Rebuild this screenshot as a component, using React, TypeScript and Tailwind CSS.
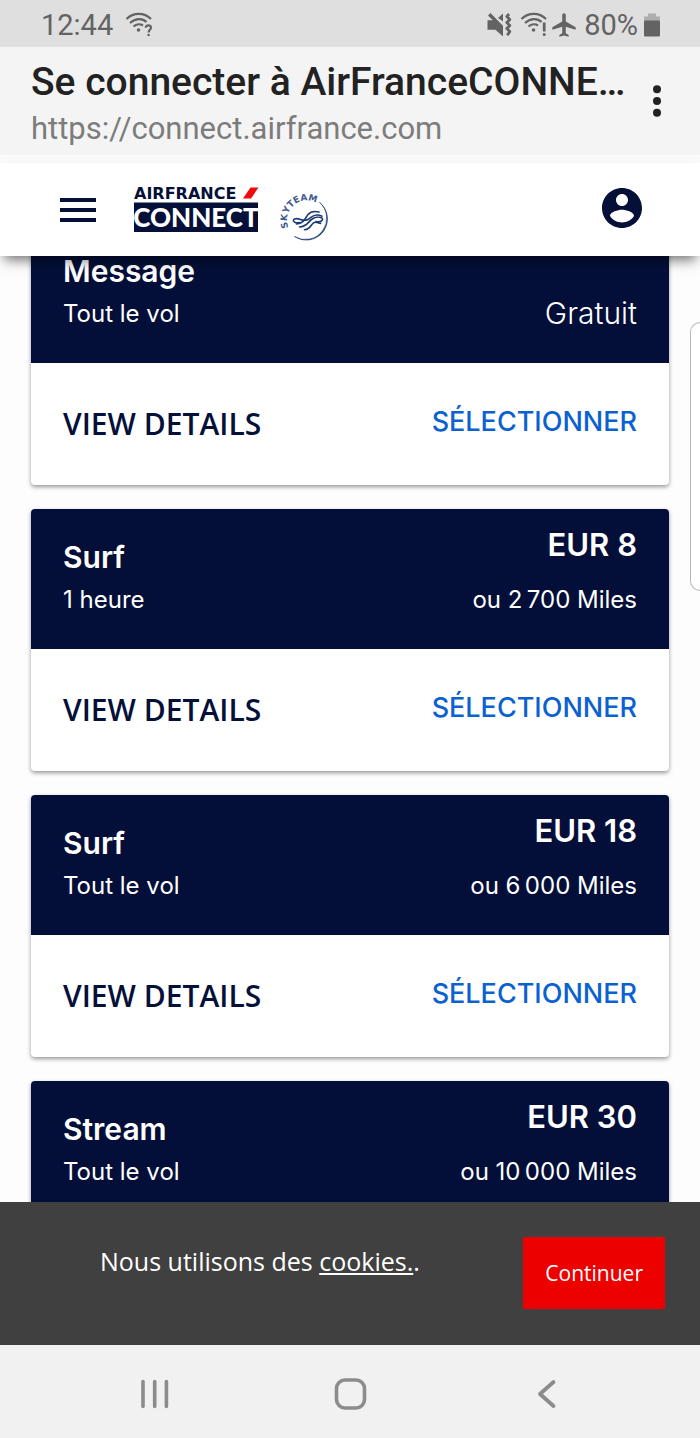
import React from "react";
import { MdAirplanemodeActive, MdMenu } from "react-icons/md";

type Plan = {
  name: string;
  duration: string;
  price: string;
  miles?: string;
  summaryOnly?: boolean;
};

const plans: Plan[] = [
  { name: "Message", duration: "Tout le vol", price: "Gratuit" },
  { name: "Surf", duration: "1 heure", price: "EUR 8", miles: "ou 2\u2009700 Miles" },
  { name: "Surf", duration: "Tout le vol", price: "EUR 18", miles: "ou 6\u2009000 Miles" },
  { name: "Stream", duration: "Tout le vol", price: "EUR 30", miles: "ou 10\u2009000 Miles", summaryOnly: true },
];

function WifiIcon({ mark }: { mark: "?" | "!" }) {
  return (
    <svg width="28" height="26" viewBox="0 0 28 26" fill="none" stroke="#636363" strokeWidth="2.2" aria-hidden="true">
      <path d="M1.5 7C8.5 0.2 19 0.2 26 7" />
      <path d="M5 11C10.5 6 17.5 6 21.5 10" />
      <path d="M8.5 14.5C11.5 11.8 15.5 11.8 18 13.6" />
      <circle cx="13.5" cy="18" r="1.8" fill="#636363" stroke="none" />
      {mark === "?" ? (
        <>
          <path d="M20.8 15.8C20.8 12.6 26 12.6 26 15.8C26 17.8 23.6 17.6 23.6 20.4" />
          <circle cx="23.6" cy="23" r="1.3" fill="#636363" stroke="none" />
        </>
      ) : (
        <>
          <path d="M24.2 10.5V19.5" strokeWidth="2.8" />
          <circle cx="24.2" cy="22.4" r="1.5" fill="#636363" stroke="none" />
        </>
      )}
    </svg>
  );
}

function MuteVibrateIcon() {
  return (
    <svg width="26" height="26" viewBox="0 0 26 26" fill="#636363" aria-hidden="true">
      <path d="M2 3.4L4.4 1L17 13.8V24.5L9.4 17.8H1.5V8.2H6.8Z" />
      <path d="M17 1.6V9.4L12 6Z" />
      <path
        d="M23 2L20.8 4.6L23.8 7.6L20.8 10.6L23.8 13.6L20.8 16.6L23.8 19.6L21.2 23.2"
        fill="none"
        stroke="#636363"
        strokeWidth="2.8"
        strokeLinejoin="round"
      />
    </svg>
  );
}

function StatusBar() {
  return (
    <div className="flex h-[47px] shrink-0 items-center justify-between bg-[#dfdfdf] pt-0.5 pr-10 pl-[41px] font-['Roboto',sans-serif] text-[29px] leading-8 text-[#636363]">
      <div className="flex items-center gap-3">
        <span>12:44</span>
        <WifiIcon mark="?" />
      </div>
      <div className="flex items-center">
        <MuteVibrateIcon />
        <span className="ml-2">
          <WifiIcon mark="!" />
        </span>
        <MdAirplanemodeActive className="mr-1.5 ml-0.5 size-7" color="#636363" />
        <span>80%</span>
        <svg className="ml-1.5" width="16" height="24" viewBox="0 0 16 24" aria-hidden="true">
          <path d="M4 0.5H12V3.5H16V8H0V3.5H4Z" fill="#aeaeae" />
          <rect y="7.5" width="16" height="16" rx="1" fill="#636363" />
        </svg>
      </div>
    </div>
  );
}

function BrowserBar() {
  return (
    <div className="flex h-[116px] shrink-0 items-start justify-between border-b-8 border-[#fafafa] bg-[#f4f4f4] pr-8 pl-[31px] font-['Roboto',sans-serif]">
      <div className="pt-3 whitespace-nowrap">
        <div className="text-[39px] leading-[46px] font-medium text-[#222]">Se connecter à AirFranceCONNE…</div>
        <div className="text-[31px] leading-[48px] text-[#7c7c7c]">https://connect.airfrance.com</div>
      </div>
      <button type="button" aria-label="Plus d’options" className="mt-[34px] shrink-0">
        <svg width="22" height="40" viewBox="0 0 22 40" fill="#222" aria-hidden="true">
          <circle cx="11" cy="8.3" r="4" />
          <circle cx="11" cy="20" r="4" />
          <circle cx="11" cy="31.7" r="4" />
        </svg>
      </button>
    </div>
  );
}

function ConnectLogo() {
  return (
    <svg className="overflow-visible" width="124" height="48" viewBox="0 0 124 48" role="img" aria-label="Air France Connect">
      <text x="0" y="12.5" fontFamily="'DejaVu Sans', sans-serif" fontWeight="700" fontSize="16" fill="#051039">
        AIRFRANCE
      </text>
      <path d="M116.5 1.5H124.5L117 12.5H109Z" fill="#f20a0a" />
      <rect y="16.5" width="124" height="29.5" fill="#051039" />
      <text x="62" y="40.5" textAnchor="middle" fontFamily="Lato, sans-serif" fontWeight="900" fontSize="26" fill="#fff">
        CONNECT
      </text>
    </svg>
  );
}

function SkyTeamLogo() {
  return (
    <svg className="overflow-visible" width="50" height="52" viewBox="0 0 50 52" role="img" aria-label="SkyTeam">
      <defs>
        <path id="skyteam-arc" d="M6.6 35.5A19.5 19.5 0 0 1 40 16" />
      </defs>
      <text fontFamily="'DejaVu Sans', sans-serif" fontSize="9" fontWeight="700" fill="#3f5a8c">
        <textPath href="#skyteam-arc">SKYTEAM</textPath>
      </text>
      <path
        d="M37.5 10.3A21.2 21.2 0 0 1 12.5 44.5A21.27 21.27 0 0 0 37.5 10.3Z"
        fill="#1d3b73"
        stroke="#1d3b73"
        strokeWidth="0.6"
      />
      <g fill="none" stroke="#1d3b73" strokeWidth="1.6" strokeLinecap="round">
        <path d="M18 30.5C13 32 9.5 28.5 12.5 27C17 25 21 30.5 26 27.5C30 25 31 22.5 35.5 23C38 23.3 39 24 40 24.2" />
        <path d="M14.5 32C22 31.5 23 26.5 26 22.5C29 18.8 33 19 37 20" />
        <path d="M17.5 35C25 34.5 26 30 29.5 27.5C32.5 25.3 37 24.5 39.8 26C42 28 38.5 30.8 34 29.5" />
        <path d="M22.5 37.8C28.5 37.3 28.5 33 31.5 30.8C33.5 29.5 36 30.8 38.6 31.4" />
      </g>
    </svg>
  );
}

function AppHeader() {
  return (
    <header className="relative z-10 flex h-[93px] shrink-0 items-center bg-white px-[54px] shadow-[0_8px_12px_-4px_rgba(0,0,0,0.55)]">
      <button type="button" aria-label="Menu">
        <MdMenu className="size-12" color="#051039" />
      </button>
      <a href="#" className="ml-8">
        <ConnectLogo />
      </a>
      <a href="#" className="mt-4 ml-6">
        <SkyTeamLogo />
      </a>
      <button type="button" aria-label="Mon compte" className="mb-1 ml-auto">
        <svg width="48" height="48" viewBox="0 0 24 24" fill="#051039" aria-hidden="true">
          <path d="M12 2C6.48 2 2 6.48 2 12s4.48 10 10 10 10-4.48 10-10S17.52 2 12 2zm0 3c1.66 0 3 1.34 3 3s-1.34 3-3 3-3-1.34-3-3 1.34-3 3-3zm0 14.2c-2.5 0-4.71-1.28-6-3.22.03-1.99 4-3.08 6-3.08 1.99 0 5.97 1.09 6 3.08-1.29 1.94-3.5 3.22-6 3.22z" />
        </svg>
      </button>
    </header>
  );
}

function PlanCard({ plan }: { plan: Plan }) {
  return (
    <li className="rounded-[4px] bg-white font-['Inter',sans-serif] shadow-[0_2px_4px_rgba(0,0,0,0.4)]">
      <div className="flex h-[140px] justify-between rounded-t-[4px] bg-[#030f38] px-8 text-white">
        <div className="pt-8">
          <h2 className="text-[30px] leading-8 font-semibold">{plan.name}</h2>
          <p className="mt-[11px] text-2xl leading-8">{plan.duration}</p>
        </div>
        <div className="pt-4 text-right">
          {plan.miles ? (
            <>
              <p className="text-[31px] leading-10 font-semibold">{plan.price}</p>
              <p className="mt-[19px] text-2xl leading-8">{plan.miles}</p>
            </>
          ) : (
            <p className="mt-[54px] text-[30px] leading-10 font-light">{plan.price}</p>
          )}
        </div>
      </div>
      {!plan.summaryOnly && (
        <div className="flex h-[122px] items-center justify-between px-8">
          <button type="button" className="font-['Open_Sans',sans-serif] text-[30px] leading-10 font-semibold text-[#051039]">
            VIEW DETAILS
          </button>
          <button type="button" className="mb-1 text-[27px] leading-10 font-medium text-[#0b61d0]">
            SÉLECTIONNER
          </button>
        </div>
      )}
    </li>
  );
}

function CookieBanner() {
  return (
    <div className="flex h-[143px] shrink-0 items-center justify-between bg-[#404040] pr-[35px] pb-0.5 pl-[100px] font-['Open_Sans',sans-serif] text-white">
      <p className="mb-6 text-[25px] leading-8">
        Nous utilisons des{" "}
        <a href="#" className="underline underline-offset-2">
          cookies.
        </a>
        .
      </p>
      <button type="button" className="h-[72px] bg-[#ec0000] px-[22px] text-[21px] leading-8">
        Continuer
      </button>
    </div>
  );
}

function SystemNav() {
  return (
    <nav className="flex h-[93px] shrink-0 items-center justify-around bg-[#f1f1f1] px-14 pt-1">
      <button type="button" aria-label="Applications récentes">
        <svg width="40" height="40" viewBox="0 0 40 40" stroke="#8c8c8c" strokeWidth="3.6" strokeLinecap="round" aria-hidden="true">
          <path d="M9 7.5V32.5M20.7 7.5V32.5M32.4 7.5V32.5" />
        </svg>
      </button>
      <button type="button" aria-label="Accueil">
        <svg width="40" height="40" viewBox="0 0 40 40" fill="none" stroke="#8c8c8c" strokeWidth="3.6" aria-hidden="true">
          <rect x="6.5" y="6" width="28" height="28" rx="8.5" />
        </svg>
      </button>
      <button type="button" aria-label="Retour">
        <svg width="40" height="40" viewBox="0 0 40 40" fill="none" stroke="#8c8c8c" strokeWidth="3.8" strokeLinecap="round" strokeLinejoin="round" aria-hidden="true">
          <path d="M27.5 8L14 20L27.5 32" />
        </svg>
      </button>
    </nav>
  );
}

export default function App() {
  return (
    <div className="relative flex h-screen flex-col overflow-hidden bg-white">
      <StatusBar />
      <BrowserBar />
      <AppHeader />
      <main className="min-h-0 flex-1 overflow-hidden bg-[#fdfdfd]">
        <ul className="-mt-[33px] flex flex-col gap-6 px-[31px]">
          {plans.map((plan) => (
            <PlanCard key={plan.name + plan.price} plan={plan} />
          ))}
        </ul>
      </main>
      <CookieBanner />
      <SystemNav />
      <div className="absolute top-[322px] right-0 h-[269px] w-[10px] rounded-l-[10px] border border-r-0 border-[#b8b8b8] bg-white" />
    </div>
  );
}
